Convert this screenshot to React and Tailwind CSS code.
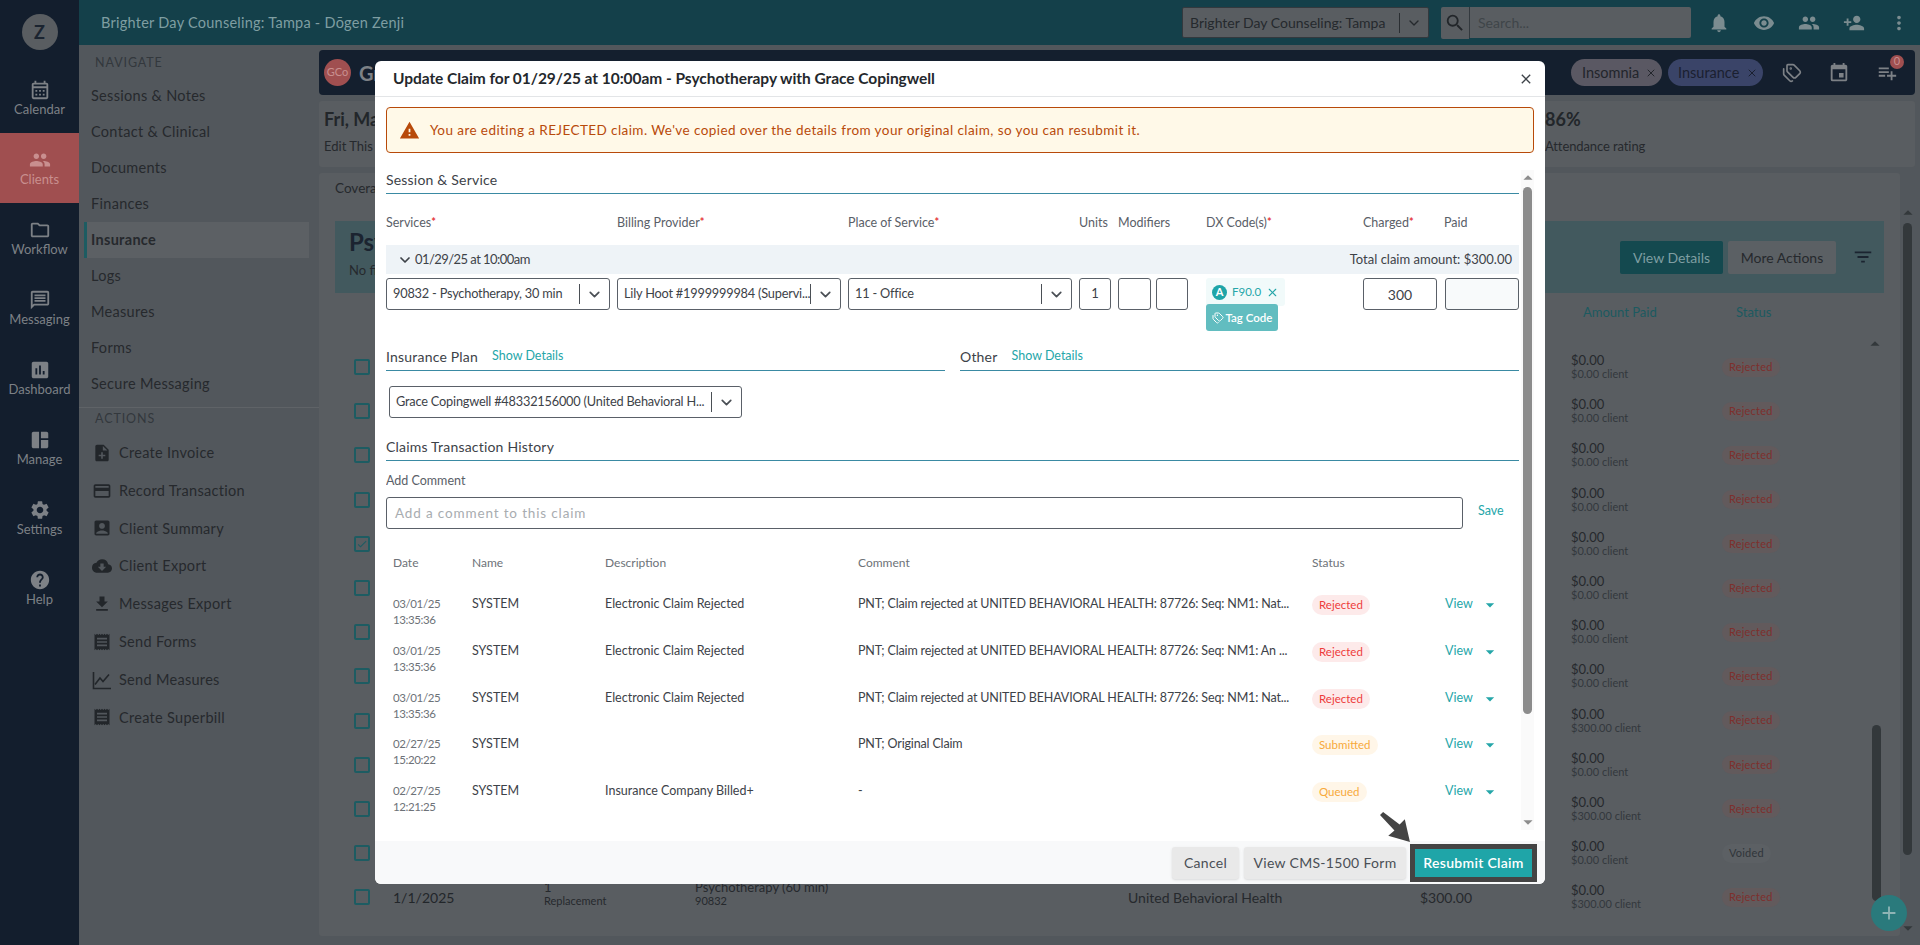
import React from "react";
import { ChevronDown, X, Tags } from "lucide-react";
import {
  MdOutlineCalendarMonth,
  MdPeople,
  MdOutlineFolder,
  MdOutlineMessage,
  MdAssessment,
  MdSpaceDashboard,
  MdSettings,
  MdHelp,
  MdNoteAdd,
  MdOutlineCreditCard,
  MdAccountBox,
  MdCloudDownload,
  MdFileDownload,
  MdReceipt,
  MdNotifications,
  MdRemoveRedEye,
  MdPersonAdd,
  MdMoreVert,
  MdSearch,
  MdPlaylistAdd,
  MdWarning,
  MdFilterList,
  MdClose,
  MdArrowDropDown,
  MdArrowDropUp,
  MdCheck,
  MdAdd,
  MdEvent,
} from "react-icons/md";

const ChartIcon = ({ className }) => (
  <svg viewBox="0 0 20 20" className={className} fill="none" stroke="currentColor" strokeWidth="1.6">
    <path d="M1.5 2v16.5H19" />
    <path d="M3 14.5 8 8l3 3.5 6-7" />
  </svg>
);

const mainNav = [
  { label: "Calendar", icon: MdOutlineCalendarMonth },
  { label: "Clients", icon: MdPeople, active: true },
  { label: "Workflow", icon: MdOutlineFolder },
  { label: "Messaging", icon: MdOutlineMessage },
  { label: "Dashboard", icon: MdAssessment },
  { label: "Manage", icon: MdSpaceDashboard },
  { label: "Settings", icon: MdSettings },
  { label: "Help", icon: MdHelp },
];

const navigateLinks = [
  "Sessions & Notes",
  "Contact & Clinical",
  "Documents",
  "Finances",
  "Insurance",
  "Logs",
  "Measures",
  "Forms",
  "Secure Messaging",
];

const actionLinks = [
  { label: "Create Invoice", icon: MdNoteAdd },
  { label: "Record Transaction", icon: MdOutlineCreditCard },
  { label: "Client Summary", icon: MdAccountBox },
  { label: "Client Export", icon: MdCloudDownload },
  { label: "Messages Export", icon: MdFileDownload },
  { label: "Send Forms", icon: MdReceipt },
  { label: "Send Measures", icon: ChartIcon },
  { label: "Create Superbill", icon: MdReceipt },
];

const bgRows = [
  { client: "$0.00", status: "Rejected" },
  { client: "$0.00", status: "Rejected" },
  { client: "$0.00", status: "Rejected" },
  { client: "$0.00", status: "Rejected" },
  { client: "$0.00", status: "Rejected", checked: true },
  { client: "$0.00", status: "Rejected" },
  { client: "$0.00", status: "Rejected" },
  { client: "$0.00", status: "Rejected" },
  { client: "$300.00", status: "Rejected" },
  { client: "$0.00", status: "Rejected" },
  { client: "$300.00", status: "Rejected" },
  { client: "$0.00", status: "Voided" },
  { client: "$300.00", status: "Rejected", last: true },
];

const history = [
  {
    date: "03/01/25",
    time: "13:35:36",
    desc: "Electronic Claim Rejected",
    comment: "PNT; Claim rejected at UNITED BEHAVIORAL HEALTH: 87726: Seq: NM1: Nat...",
    status: "Rejected",
  },
  {
    date: "03/01/25",
    time: "13:35:36",
    desc: "Electronic Claim Rejected",
    comment: "PNT; Claim rejected at UNITED BEHAVIORAL HEALTH: 87726: Seq: NM1: An ...",
    status: "Rejected",
  },
  {
    date: "03/01/25",
    time: "13:35:36",
    desc: "Electronic Claim Rejected",
    comment: "PNT; Claim rejected at UNITED BEHAVIORAL HEALTH: 87726: Seq: NM1: Nat...",
    status: "Rejected",
  },
  { date: "02/27/25", time: "15:20:22", desc: "", comment: "PNT; Original Claim", status: "Submitted" },
  { date: "02/27/25", time: "12:21:25", desc: "Insurance Company Billed+", comment: "-", status: "Queued" },
];

const Select = ({ value, className }) => (
  <div className={`flex items-center h-[32px] border border-[#5a6068] rounded-[3px] pl-[6px] bg-white ${className}`}>
    <span className="flex-1 min-w-0 whitespace-nowrap overflow-hidden text-[12.75px] text-[#3d4248] tracking-[-0.2px]">{value}</span>
    <span className="w-px h-[20px] bg-[#4a4f55]"></span>
    <span className="w-[29px] flex justify-center text-[#4a4f55]">
      <ChevronDown size={17} strokeWidth={2.4} />
    </span>
  </div>
);

const SectionTitle = ({ title, link, className }) => (
  <div className={`h-[28px] flex items-center gap-[14px] border-b border-[#3a8aa3] pb-[1px] ${className}`}>
    <span className="text-[14px] text-[#3d4248] tracking-[0.2px]">{title}</span>
    {link ? <span className="text-[12.5px] text-[#25a6a9]">{link}</span> : null}
  </div>
);

const Req = () => <span className="text-[#e5363a] text-[11px] font-bold align-top">*</span>;

const statusStyle = {
  Rejected: "bg-[#fdeaea] text-[#ee3b3b]",
  Submitted: "bg-[#fff6e8] text-[#f7a93b]",
  Queued: "bg-[#fff6e8] text-[#f7a93b]",
};

const BackgroundPage = () => (
  <>
    {/* Left rail */}
    <aside className="w-[79px] shrink-0 h-full bg-[#131e2d] flex flex-col">
      <div className="h-[63px] flex items-center justify-center">
        <div className="w-[36px] h-[36px] mb-[-1px] rounded-full bg-[#595d61] text-[#1b2430] font-bold text-[18px] flex items-center justify-center">
          Z
        </div>
      </div>
      {mainNav.map((item) => (
        <div
          key={item.label}
          className={`h-[70px] flex flex-col items-center justify-center text-[13px] ${
            item.active ? "bg-[#a04f50] text-[#c98f8f]" : "text-[#7d8186]"
          }`}
        >
          <item.icon size={22} />
          <span className="leading-[16px]">{item.label}</span>
        </div>
      ))}
    </aside>

    <div className="flex-1 min-w-0 h-full flex flex-col">
      {/* Top bar */}
      <header className="h-[45px] shrink-0 bg-[#14404a] flex items-center">
        <span className="ml-[22px] text-[14.5px] tracking-[0.25px] text-[#7f9ea2]">
          Brighter Day Counseling: Tampa - Dōgen Zenji
        </span>
        <div className="ml-auto flex items-center h-[31px] w-[247px] bg-[#595d61] border border-[#33393e] rounded-[2px] pl-[7px]">
          <span className="flex-1 text-[14px] text-[#25292d] whitespace-nowrap overflow-hidden">Brighter Day Counseling: Tampa</span>
          <span className="w-px h-[20px] bg-[#2a2e32]"></span>
          <ChevronDown size={16} className="mx-[6px] text-[#25292d]" />
        </div>
        <div className="ml-[12px] w-[28px] h-[32px] bg-[#595d61] flex items-center justify-center rounded-l-[2px]">
          <MdSearch size={22} className="text-[#22262a]" />
        </div>
        <div className="w-[222px] h-[31px] bg-[#595d61] border-l border-[#33393e] rounded-r-[2px] pl-[8px] flex items-center text-[14px] text-[#3f4549]">
          Search...
        </div>
        <div className="flex items-center gap-[23px] ml-[17px] mr-[10px] text-[#7b8c90]">
          <MdNotifications size={22} />
          <MdRemoveRedEye size={22} />
          <MdPeople size={22} />
          <MdPersonAdd size={22} />
          <MdMoreVert size={22} />
        </div>
      </header>

      <div className="flex-1 min-h-0 flex bg-[#52575c]">
        {/* Section nav */}
        <nav className="w-[240px] shrink-0 pt-[9px] text-[#26292d]">
          <div className="pl-[16px] h-[18px] leading-[18px] text-[12.5px] tracking-[0.9px] text-[#33383d]">NAVIGATE</div>
          <div className="mt-[6px] pl-[5px] pr-[10px]">
            {navigateLinks.map((link) => (
              <div
                key={link}
                className={`h-[36px] flex items-center pl-[7px] text-[14.5px] tracking-[0.3px] ${
                  link === "Insurance" ? "bg-[#5c6064] border-l-[3px] border-[#1d5c62] !pl-[4px] font-bold" : ""
                }`}
              >
                {link}
              </div>
            ))}
          </div>
          <div className="mt-[5px] border-t border-[#5f6367] pt-[2px]">
            <div className="pl-[16px] h-[18px] leading-[18px] text-[12.5px] tracking-[0.9px] text-[#33383d]">ACTIONS</div>
          </div>
          <div className="mt-[6px] pl-[12px]">
            {actionLinks.map((action) => (
              <div key={action.label} className="h-[37.8px] flex items-center text-[14.5px] tracking-[0.3px]">
                <span className="w-[22px] flex justify-center">
                  <action.icon size={21} className="w-[20px] h-[20px] text-[#22262a]" />
                </span>
                <span className="ml-[6px]">{action.label}</span>
              </div>
            ))}
          </div>
        </nav>

        {/* Client content */}
        <main className="flex-1 min-w-0 pt-[5px] pr-[5px] flex flex-col">
          <div className="h-[45px] shrink-0 bg-[#141f2e] rounded-[4px] flex items-center pl-[5px] pr-[17px]">
            <span className="w-[27px] h-[27px] rounded-full bg-[#a04f50] text-[#c98f8f] text-[11px] flex items-center justify-center">
              GCo
            </span>
            <span className="ml-[8px] text-[20px] font-bold text-[#7d8186]">Grace Copingwell</span>
            <span className="ml-auto h-[27px] w-[91px] rounded-full bg-[#5a5863] text-[#22252b] text-[14.5px] flex items-center pl-[11px]">
              Insomnia
              <X size={12} className="ml-[6px]" />
            </span>
            <span className="ml-[6px] h-[27px] w-[95px] rounded-full bg-[#3a4468] text-[#1a2030] text-[14.5px] flex items-center pl-[10px]">
              Insurance
              <X size={12} className="ml-[7px]" />
            </span>
            <div className="flex items-center gap-[26px] ml-[19px] text-[#7d8186]">
              <Tags size={20} />
              <MdEvent size={22} />
              <span className="relative">
                <MdPlaylistAdd size={22} />
                <span className="absolute -top-[7px] -right-[6px] w-[14px] h-[14px] rounded-full bg-[#a04f50] text-[#c98f8f] text-[11px] flex items-center justify-center">
                  0
                </span>
              </span>
            </div>
          </div>

          <div className="h-[66px] shrink-0 mt-[6px] bg-[#595d61] rounded-[3px] pl-[5px] pt-[6px] flex">
            <div className="w-[1221px]">
              <div className="text-[18px] font-bold text-[#22262a] leading-[24px]">Fri, Mar 7</div>
              <div className="text-[13px] text-[#26292d] mt-[6px]">Edit This</div>
            </div>
            <div>
              <div className="text-[18px] font-bold text-[#22262a] leading-[24px]">86%</div>
              <div className="text-[13px] text-[#26292d] mt-[6px] tracking-[-0.1px]">Attendance rating</div>
            </div>
          </div>

          <div className="mt-[6px] h-[763px] flex">
            <div className="w-[1581px] h-full bg-[#595d61] rounded-[3px] px-[16px] pt-[6px]">
              <div className="text-[13.5px] text-[#26292d] h-[18px] leading-[18px]">Coverage</div>
              <div className="mt-[24px] h-[72px] bg-[#42595e] flex items-center pl-[14px]">
                <div className="self-start pt-[6px]">
                  <div className="text-[24px] font-bold text-[#1b2430] leading-[30px]">Psychotherapy</div>
                  <div className="text-[13px] text-[#26292d] mt-[4px]">No filters</div>
                </div>
                <span className="ml-auto h-[33px] w-[103px] bg-[#14494f] rounded-[2px] text-[14px] text-[#7f9ea2] flex items-center justify-center">
                  View Details
                </span>
                <span className="ml-[5px] h-[33px] w-[108px] bg-[#5b6064] rounded-[2px] text-[14px] text-[#26292d] flex items-center justify-center">
                  More Actions
                </span>
                <MdFilterList size={22} className="ml-[16px] mr-[10px] text-[#1b2430]" />
              </div>
              <div className="mt-[10px] h-[20px] relative text-[13px] text-[#1c5a60]">
                <span className="absolute left-[1248px]">Amount Paid</span>
                <span className="absolute left-[1401px]">Status</span>
              </div>
              <div className="mt-[22px] relative">
                {bgRows.map((row, i) => (
                  <div key={i} className="h-[44.2px] flex items-center">
                    <span className="ml-[19px] w-[16px] h-[16px] border-2 border-[#1d5c62] rounded-[2px] flex items-center justify-center text-[#1d5c62]">
                      {row.checked ? <MdCheck size={14} /> : null}
                    </span>
                    <span className="ml-[23px] w-[151px] text-[14px] text-[#22262a]">{row.last ? "1/1/2025" : ""}</span>
                    <span className="w-[151px] text-[11px] text-[#26292d] leading-[14px]">
                      {row.last ? (
                        <>
                          <span className="block text-[13px] mt-[-6px]">1</span>
                          <span className="block">Replacement</span>
                        </>
                      ) : null}
                    </span>
                    <span className="w-[433px] text-[11px] text-[#26292d] leading-[14px]">
                      {row.last ? (
                        <>
                          <span className="block text-[13px] mt-[-6px]">Psychotherapy (60 min)</span>
                          <span className="block">90832</span>
                        </>
                      ) : null}
                    </span>
                    <span className="w-[292px] text-[14px] text-[#26292d]">{row.last ? "United Behavioral Health" : ""}</span>
                    <span className="w-[151px] text-[14px] text-[#26292d]">{row.last ? "$300.00" : ""}</span>
                    <span className="w-[151px] leading-[13px]">
                      <span className="block text-[13px] text-[#26292d]">$0.00</span>
                      <span className="block text-[11px] text-[#33383d]">{row.client} client</span>
                    </span>
                    <span
                      className={`h-[19px] rounded-full bg-[#625a5c] text-[11px] flex items-center px-[7px] tracking-[0.2px] ${
                        row.status === "Voided" ? "!bg-[#5c6064] text-[#30353a]" : "text-[#7e2f2d]"
                      }`}
                    >
                      {row.status}
                    </span>
                  </div>
                ))}
              </div>
            </div>
          </div>
        </main>
      </div>
    </div>

    {/* Page scrollbars and the add button */}
    <MdArrowDropUp size={22} className="absolute left-[1864px] top-[333px] text-[#33383b]" />
    <div className="absolute left-[1872px] top-[725px] w-[9px] h-[176px] rounded-full bg-[#33383b]"></div>
    <MdArrowDropUp size={22} className="absolute left-[1897px] top-[202px] text-[#33383b]" />
    <div className="absolute left-[1903px] top-[223px] w-[9px] h-[632px] rounded-full bg-[#33383b]"></div>
    <MdArrowDropDown size={22} className="absolute left-[1897px] top-[917px] text-[#33383b]" />
    <div className="absolute left-[1871px] top-[895px] w-[36px] h-[36px] rounded-full bg-[#2a7a7c] text-[#8fb4b5] flex items-center justify-center">
      <MdAdd size={22} />
    </div>
  </>
);

const ClaimModal = () => (
  <div className="absolute inset-0 flex items-center justify-center">
    <div className="relative w-[1170px] h-[823px] bg-white rounded-[6px] flex flex-col text-[#3d4248]">
      <div className="h-[35px] shrink-0 box-content border-b border-[#e3e5e7] flex items-center justify-between pl-[18px] pr-[11px]">
        <span className="text-[15.5px] font-bold text-[#24282c] tracking-[-0.04px]">
          Update Claim for 01/29/25 at 10:00am - Psychotherapy with Grace Copingwell
        </span>
        <MdClose size={16} className="text-[#3d4248]" />
      </div>

      <div className="mt-[10px] ml-[11px] mr-[11px] h-[46px] shrink-0 border border-[#b84a0a] rounded-[4px] bg-[#fff9e8] flex items-center pl-[12px]">
        <MdWarning size={21} className="text-[#b84a0a]" />
        <span className="ml-[10px] text-[13.5px] text-[#b84a0a] tracking-[0.42px]">
          You are editing a REJECTED claim. We've copied over the details from your original claim, so you can resubmit it.
        </span>
      </div>

      <div className="mt-[13px] flex h-[664px] shrink-0 ml-[11px] mr-[11px]">
        <div className="w-[1133px] shrink-0 overflow-hidden">
          <SectionTitle title="Session & Service" />

          <div className="mt-[19px] h-[20px] flex items-center text-[12.5px] text-[#5a6068]">
            <span className="w-[231px]">
              Services
              <Req />
            </span>
            <span className="w-[231px]">
              Billing Provider
              <Req />
            </span>
            <span className="w-[231px]">
              Place of Service
              <Req />
            </span>
            <span className="w-[39px]">Units</span>
            <span className="w-[88px]">Modifiers</span>
            <span className="w-[157px]">
              DX Code(s)
              <Req />
            </span>
            <span className="w-[81px]">
              Charged
              <Req />
            </span>
            <span>Paid</span>
          </div>

          <div className="mt-[12px] h-[29px] bg-[#eef3f7] flex items-center justify-between pl-[11px] pr-[7px] text-[13px] text-[#3d4248]">
            <span className="flex items-center gap-[2px] tracking-[-0.55px]">
              <ChevronDown size={16} strokeWidth={2.6} />
              01/29/25 at 10:00am
            </span>
            <span>Total claim amount: $300.00</span>
          </div>

          <div className="mt-[4px] flex items-start h-[53px]">
            <Select value="90832 - Psychotherapy, 30 min" className="w-[224px]" />
            <Select value="Lily Hoot #1999999984 (Supervi..." className="w-[224px] ml-[7px]" />
            <Select value="11 - Office" className="w-[224px] ml-[7px]" />
            <div className="ml-[7px] w-[32px] h-[32px] border border-[#5a6068] rounded-[3px] flex items-center justify-center text-[13px]">1</div>
            <div className="ml-[7px] w-[33px] h-[32px] border border-[#5a6068] rounded-[3px]"></div>
            <div className="ml-[5px] w-[32px] h-[32px] border border-[#5a6068] rounded-[3px]"></div>
            <div className="ml-[18px] w-[157px]">
              <div className="w-[79px] h-[28px] bg-[#f1fafa] rounded-[3px] flex items-center pl-[6px] text-[11.5px] text-[#25a6a9]">
                <span className="w-[15px] h-[15px] rounded-full bg-[#1fa5a8] text-white font-bold text-[11px] flex items-center justify-center">A</span>
                <span className="ml-[5px]">F90.0</span>
                <X size={13} className="ml-[5px]" />
              </div>
              <div className="-mt-[2px] w-[72px] h-[27px] bg-[#62bdc0] rounded-[3px] flex items-center justify-center gap-[2px] text-[11.5px] font-semibold text-white">
                <Tags size={12} />
                Tag Code
              </div>
            </div>
            <div className="w-[74px] h-[32px] border border-[#5a6068] rounded-[3px] flex items-center justify-center text-[14px]">300</div>
            <div className="ml-[8px] w-[74px] h-[32px] border border-[#5a6068] rounded-[3px] bg-[#f8fafb]"></div>
          </div>

          <div className="mt-[12px] flex">
            <SectionTitle title="Insurance Plan" link="Show Details" className="w-[559px]" />
            <SectionTitle title="Other" link="Show Details" className="w-[559px] ml-[15px]" />
          </div>

          <Select value="Grace Copingwell #48332156000 (United Behavioral H..." className="w-[353px] ml-[3px] mt-[15px]" />

          <SectionTitle title="Claims Transaction History" className="mt-[15px]" />

          <div className="mt-[10px] h-[20px] leading-[20px] text-[12.5px] text-[#5a6068]">Add Comment</div>
          <div className="mt-[6px] flex items-center">
            <div className="w-[1077px] h-[32px] border border-[#5a6068] rounded-[3px] pl-[8px] flex items-center text-[13.5px] tracking-[0.85px] text-[#a8acb0]">
              Add a comment to this claim
            </div>
            <span className="ml-[15px] -mt-[3px] text-[12.5px] text-[#25a6a9]">Save</span>
          </div>

          <div className="mt-[24px] h-[20px] pl-[7px] grid grid-cols-[79px_133px_253px_454px_1fr] items-center text-[12px] text-[#6d7278]">
            <span>Date</span>
            <span>Name</span>
            <span>Description</span>
            <span>Comment</span>
            <span>Status</span>
          </div>

          <div className="mt-[23px]">
            {history.map((row, i) => (
              <div key={i} className="h-[46.8px] pl-[7px] grid grid-cols-[79px_133px_253px_454px_133px_1fr] items-start text-[12.5px] leading-[16px]">
                <span className="text-[11.5px] text-[#6d7278] tracking-[-0.4px]">
                  {row.date}
                  <br />
                  {row.time}
                </span>
                <span>SYSTEM</span>
                <span>{row.desc}</span>
                <span className="whitespace-nowrap tracking-[-0.15px]">{row.comment}</span>
                <span className="-mt-[1px]">
                  <span className={`inline-flex items-center h-[20px] px-[7px] rounded-full text-[11.5px] ${statusStyle[row.status]}`}>
                    {row.status}
                  </span>
                </span>
                <span className="flex items-start text-[#25a6a9]">
                  View
                  <MdArrowDropDown size={20} className="ml-[7px] -mt-[1px]" />
                </span>
              </div>
            ))}
          </div>
        </div>

        {/* Inner scrollbar */}
        <div className="ml-[2px] mt-[4px] h-[660px] w-[13px] shrink-0 bg-[#fafafa] flex flex-col items-center relative">
          <MdArrowDropUp size={22} className="absolute -top-[3px] text-[#8c8c8c]" />
          <div className="mt-[17px] w-[9px] h-[527px] rounded-full bg-[#8c8c8c]"></div>
          <MdArrowDropDown size={22} className="absolute top-[641px] text-[#8c8c8c]" />
        </div>
      </div>

      <div className="mt-auto h-[43px] bg-[#f8f9fa] rounded-b-[6px] flex items-center justify-end pr-[8px]">
        <span className="w-[67px] h-[32px] bg-[#e9e9e9] rounded-[3px] shadow-sm flex items-center justify-center text-[14px] tracking-[0.3px] text-[#4a4f55]">
          Cancel
        </span>
        <span className="ml-[5px] w-[162px] h-[32px] bg-[#e9e9e9] rounded-[3px] shadow-sm flex items-center justify-center text-[14px] tracking-[0.3px] text-[#4a4f55]">
          View CMS-1500 Form
        </span>
        <span className="ml-[4px] w-[127px] h-[38px] border-[5px] border-[#444444] bg-[#1fa5a8] flex items-center justify-center text-[14px] font-semibold tracking-[0.3px] text-white">
          Resubmit Claim
        </span>
      </div>

      {/* Annotation arrow */}
      <svg viewBox="0 0 30 30" className="absolute left-[1005px] top-[751px] w-[31px] h-[31px] text-[#444444]" fill="currentColor">
        <path d="M3 0 0 3l14 15-6 5 21 6-5-22-5 5z" />
      </svg>
    </div>
  </div>
);

const App = () => (
  <div className="relative w-full h-[945px] overflow-hidden flex font-['Lato',sans-serif]">
    <BackgroundPage />
    <ClaimModal />
  </div>
);

export default App;
